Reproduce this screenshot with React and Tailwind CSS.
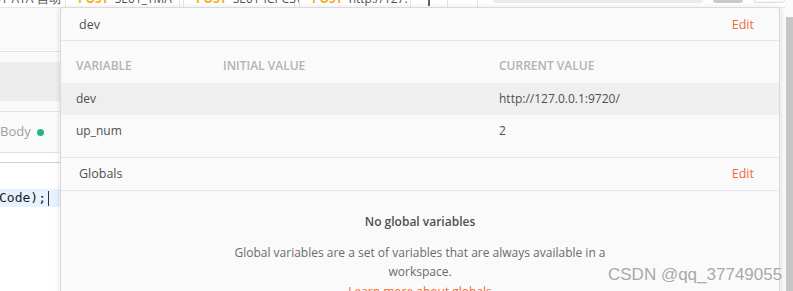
import clsx from 'clsx'

const sans = { fontFamily: '"Open Sans", "Noto Sans", sans-serif' }

// 顶部标签条,只露出下半截
function Tab({ method, label, dot, className }) {
  return (
    <div className={clsx('flex h-[22px] items-center gap-[6px] border-x border-[#e3e3e3] bg-white pt-[5px] text-[12px]', className)}>
      {method && <span className="font-bold text-[#f5b026]">{method}</span>}
      <span className="whitespace-nowrap text-[#505050]">{label}</span>
      {dot && <span className="h-[7px] w-[7px] rounded-full bg-[#f26b3a]" />}
    </div>
  )
}

function TopStrip() {
  return (
    <div className="flex h-[8px] items-end overflow-hidden border-b border-[#e6e6e6] bg-white">
      <div className="flex h-[22px] w-[63px] items-center overflow-hidden whitespace-nowrap pt-[5px] text-[12px] text-[#505050]">
        <span className="-ml-[6px]">01-ATA-自动化</span>
      </div>
      <Tab method="POST" label="SE01_TMA" className="ml-[2px] w-[115px] pl-[12px]" />
      <Tab method="POST" label="SE01-ICPCSV" className="ml-[3px] w-[112px] pl-[12px]" />
      <Tab method="POST" label="http://127." dot className="ml-[4px] w-[112px] pl-[12px]" />
      <div className="flex h-[22px] w-[37px] items-center justify-center border-r border-[#e3e3e3] pt-[5px]">
        <span className="h-[14px] w-[2px] bg-[#606060]" />
      </div>
      <div className="flex h-[22px] w-[30px] items-center justify-center border-r border-[#e3e3e3] pt-[5px] text-[12px] font-bold tracking-[1px] text-[#707070]">
        ···
      </div>
      <div className="mb-[4px] ml-[15px] h-[22px] w-[210px] rounded-[3px] bg-[#ebebeb]" />
      <div className="mb-[4px] ml-[10px] h-[22px] w-[30px] rounded-[3px] bg-[#c9c9c9]" />
      <div className="mb-[4px] ml-[10px] h-[22px] w-[32px] rounded-[3px] border border-[#dcdcdc] bg-[#fafafa]" />
    </div>
  )
}

function LeftPane() {
  return (
    <div className="flex w-[780px] flex-col">
      <div className="h-[44px] border-b border-[#e2e2e2] bg-[#fafafa]" />
      <div className="h-[10px] bg-[#fafafa]" />
      <div className="h-[39px] bg-[#ededed]" />
      <div className="h-[11px] border-b border-[#e2e2e2] bg-[#fafafa]" />
      <div className="flex h-[41px] items-center gap-[6px] border-b border-[#e2e2e2] bg-[#fafafa] text-[13px] text-[#a0a0a0]">
        <span>Body</span>
        <span className="h-[7px] w-[7px] rounded-full bg-[#26b47f]" />
      </div>
      <div className="h-[10px] border-b border-[#cfcfcf] bg-white" />
      <div className="h-[26px] bg-white" />
      <div className="flex h-[18px] items-center bg-[#e8f2fe] text-[13px] text-[#1a1a1a]" style={{ fontFamily: '"DejaVu Sans Mono", monospace' }}>
        <span className="-ml-[1px]">Code);</span>
        <span className="ml-[2px] h-[15px] w-px bg-[#333]" />
      </div>
      <div className="h-[90px] bg-white" />
    </div>
  )
}

function Popup() {
  return (
    <div className="absolute left-[60px] top-[7px] w-[720px] rounded-[3px] border border-[#dadada] bg-[#fafafa] text-[12px] text-[#505050] shadow-[0_1px_6px_rgba(0,0,0,0.12)]">
      <div className="flex h-[33px] items-center justify-between border-b border-[#e6e6e6] pl-[18px] pr-[25px] pt-[3px]">
        <span className="text-[12.5px]">dev</span>
        <span className="text-[12.5px] text-[#f26b3a]">Edit</span>
      </div>
      <div className="border-b border-[#e6e6e6] pb-[10px]">
        <div className="grid h-[42px] grid-cols-[147px_276px_1fr] items-end px-[15px] pb-[8px] text-[12px] font-semibold text-[#b3b3b3]">
          <span>VARIABLE</span>
          <span>INITIAL VALUE</span>
          <span>CURRENT VALUE</span>
        </div>
        <div className="grid h-[32px] grid-cols-[147px_276px_1fr] items-center bg-[#efefef] px-[15px]">
          <span>dev</span>
          <span />
          <span>http://127.0.0.1:9720/</span>
        </div>
        <div className="grid h-[32px] grid-cols-[147px_276px_1fr] items-center px-[15px]">
          <span>up_num</span>
          <span />
          <span>2</span>
        </div>
      </div>
      <div className="flex h-[33px] items-center justify-between border-b border-[#e6e6e6] pl-[18px] pr-[25px]">
        <span className="text-[12.5px]">Globals</span>
        <span className="text-[12.5px] text-[#f26b3a]">Edit</span>
      </div>
      <div className="flex flex-col items-center pt-[22px] pb-[20px] text-center">
        <div className="font-semibold">No global variables</div>
        <p className="mt-[12px] w-[385px] leading-[19px] text-[#6b6b6b]">
          Global variables are a set of variables that are always available in a workspace.
        </p>
        <div className="mt-[2px] text-[#f26b3a]">Learn more about globals</div>
      </div>
    </div>
  )
}

export default function App() {
  return (
    <div className="relative h-[291px] w-[793px] overflow-hidden bg-[#fafafa]" style={sans}>
      <div className="flex">
        <div className="flex flex-col">
          <TopStrip />
          <LeftPane />
        </div>
        <div className="flex w-[13px] flex-col">
          <div className="flex flex-1">
            <div className="ml-[1px] mt-[17px] w-[7px] bg-[#c6c6c6]" />
            <div className="w-[5px] bg-[#2d2d2d]" />
          </div>
        </div>
      </div>
      <Popup />
      <div
        className="absolute left-[608px] top-[262px] text-[17px] text-[#a8a8a8]"
        style={{ fontFamily: '"Liberation Sans", Arial, sans-serif', textShadow: '0 0 2px #fff' }}
      >
        CSDN @qq_37749055
      </div>
    </div>
  )
}
